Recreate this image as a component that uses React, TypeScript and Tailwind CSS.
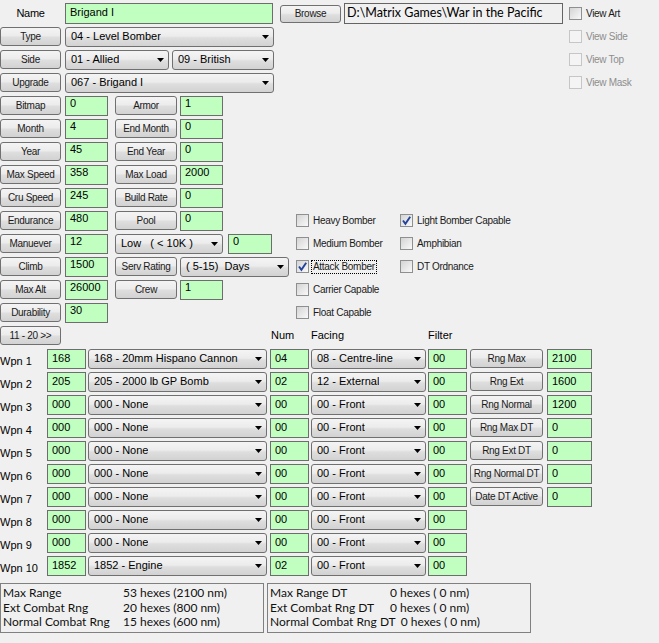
import React from 'react';

const btnBg = 'bg-[linear-gradient(#f4f4f4,#ececec_45%,#dedede_55%,#d2d2d2)]';

const Btn = ({ w, h = 'h-[19px]', children }: { w: string; h?: string; children: React.ReactNode }) => (
  <div
    className={`flex ${h} ${w} shrink-0 items-center justify-center rounded-[3px] border border-[#707070] ${btnBg} text-[10px] leading-none tracking-[-0.3px] text-[#1a1a1a]`}
  >
    {children}
  </div>
);

const Field = ({ w, v, pt = 'pt-0', h = 'h-[20px]' }: { w: string; v: string; pt?: string; h?: string }) => (
  <div className={`${h} ${w} ${pt} shrink-0 overflow-hidden border border-[#6d6d6d] bg-[#c0ffc0] pl-[4px] text-[11px] leading-[13px]`}>
    {v}
  </div>
);

const Arrow = () => (
  <svg width="7" height="4" viewBox="0 0 7 4" className="mr-[4px] shrink-0">
    <path d="M0 0 H7 L3.5 4 Z" fill="#000" />
  </svg>
);

const Combo = ({ w, v }: { w: string; v: string }) => (
  <div
    className={`flex h-[20px] ${w} shrink-0 items-center justify-between rounded-[3px] border border-[#707070] ${btnBg} pl-[5px] text-[11px]`}
  >
    <span className="truncate">{v}</span>
    <Arrow />
  </div>
);

const Check = ({
  label,
  checked = false,
  disabled = false,
  focus = false,
}: {
  label: string;
  checked?: boolean;
  disabled?: boolean;
  focus?: boolean;
}) => (
  <div className="flex items-center">
    <div
      className={`flex h-[13px] w-[13px] shrink-0 items-center justify-center border ${
        disabled ? 'border-[#c6c6c6] bg-[#f4f4f4]' : 'border-[#8e8f8f] bg-[linear-gradient(135deg,#d4d4d4,#f9f9f9)]'
      }`}
    >
      {checked && (
        <svg width="11" height="11" viewBox="0 0 11 11">
          <path d="M2 5.5 L4.4 8.8 L9.2 1.8" stroke="#24449c" strokeWidth="1.9" fill="none" />
        </svg>
      )}
    </div>
    <span
      className={`ml-[3px] px-px text-[10px] leading-[12px] tracking-[-0.3px] ${disabled ? 'text-[#8d8d8d]' : 'text-[#1a1a1a]'} ${
        focus ? 'outline outline-1 outline-dotted outline-black' : ''
      }`}
    >
      {label}
    </span>
  </div>
);

const Row = ({ children }: { children: React.ReactNode }) => <div className="flex h-[23px] items-center">{children}</div>;

const weapons = [
  { n: 'Wpn 1', id: '168', name: '168 - 20mm Hispano Cannon', num: '04', face: '08 - Centre-line', btn: 'Rng Max', val: '2100' },
  { n: 'Wpn 2', id: '205', name: '205 - 2000 lb GP Bomb', num: '02', face: '12 - External', btn: 'Rng Ext', val: '1600' },
  { n: 'Wpn 3', id: '000', name: '000 - None', num: '00', face: '00 - Front', btn: 'Rng Normal', val: '1200' },
  { n: 'Wpn 4', id: '000', name: '000 - None', num: '00', face: '00 - Front', btn: 'Rng Max DT', val: '0' },
  { n: 'Wpn 5', id: '000', name: '000 - None', num: '00', face: '00 - Front', btn: 'Rng Ext DT', val: '0' },
  { n: 'Wpn 6', id: '000', name: '000 - None', num: '00', face: '00 - Front', btn: 'Rng Normal DT', val: '0' },
  { n: 'Wpn 7', id: '000', name: '000 - None', num: '00', face: '00 - Front', btn: 'Date DT Active', val: '0' },
  { n: 'Wpn 8', id: '000', name: '000 - None', num: '00', face: '00 - Front' },
  { n: 'Wpn 9', id: '000', name: '000 - None', num: '00', face: '00 - Front' },
  { n: 'Wpn 10', id: '1852', name: '1852 - Engine', num: '02', face: '00 - Front' },
];

const statPair = (a: [string, string, string][]) =>
  a.map(([k, v, extra]) => (
    <div key={k} className="flex whitespace-nowrap">
      <span className={`min-w-[120px] shrink-0 ${extra}`}>{k}</span>
      <span>{v}</span>
    </div>
  ));

export default function App() {
  return (
    <div className="h-[643px] w-[659px] overflow-hidden bg-[#f0f0f0] pt-[2px] font-['Liberation_Sans',Arial,sans-serif] text-black">
      {/* name / art row */}
      <Row>
        <div className="w-[61px] shrink-0 text-center text-[11px] tracking-[-0.3px]">Name</div>
        <div className="ml-[4px]">
          <Field w="w-[208px]" h="h-[21px]" pt="pt-[2px]" v="Brigand I" />
        </div>
        <div className="ml-[7px]">
          <Btn w="w-[61px]" h="h-[18px]">
            Browse
          </Btn>
        </div>
        <div className="ml-[3px] h-[21px] w-[219px] shrink-0 overflow-hidden whitespace-nowrap border border-[#646464] pl-[2px] font-['Lato',sans-serif] text-[12.5px] leading-[17px]">
          {'D:\\Matrix Games\\War in the Pacific'}
        </div>
        <div className="ml-[6px]">
          <Check label="View Art" />
        </div>
      </Row>

      <Row>
        <Btn w="w-[61px]">Type</Btn>
        <div className="ml-[4px] w-[504px]">
          <Combo w="w-[209px]" v="04 - Level Bomber" />
        </div>
        <Check label="View Side" disabled />
      </Row>
      <Row>
        <Btn w="w-[61px]">Side</Btn>
        <div className="ml-[4px] flex w-[504px]">
          <Combo w="w-[104px]" v="01 - Allied" />
          <div className="ml-[3px]">
            <Combo w="w-[102px]" v="09 - British" />
          </div>
        </div>
        <Check label="View Top" disabled />
      </Row>
      <Row>
        <Btn w="w-[61px]">Upgrade</Btn>
        <div className="ml-[4px] w-[504px]">
          <Combo w="w-[209px]" v="067 - Brigand I" />
        </div>
        <Check label="View Mask" disabled />
      </Row>

      {[
        ['Bitmap', '0', 'Armor', '1'],
        ['Month', '4', 'End Month', '0'],
        ['Year', '45', 'End Year', '0'],
        ['Max Speed', '358', 'Max Load', '2000'],
        ['Cru Speed', '245', 'Build Rate', '0'],
      ].map(([a, av, b, bv]) => (
        <Row key={a}>
          <Btn w="w-[61px]">{a}</Btn>
          <div className="ml-[4px]">
            <Field w="w-[43px]" v={av} />
          </div>
          <div className="ml-[7px]">
            <Btn w="w-[62px]">{b}</Btn>
          </div>
          <div className="ml-[3px]">
            <Field w="w-[43px]" v={bv} />
          </div>
        </Row>
      ))}

      {/* rows with bomber checkboxes */}
      <Row>
        <div className="flex w-[296px] shrink-0 items-center">
          <Btn w="w-[61px]">Endurance</Btn>
          <div className="ml-[4px]">
            <Field w="w-[43px]" v="480" />
          </div>
          <div className="ml-[7px]">
            <Btn w="w-[62px]">Pool</Btn>
          </div>
          <div className="ml-[3px]">
            <Field w="w-[43px]" v="0" />
          </div>
        </div>
        <div className="w-[104px] shrink-0">
          <Check label="Heavy Bomber" />
        </div>
        <Check label="Light Bomber Capable" checked />
      </Row>
      <Row>
        <div className="flex w-[296px] shrink-0 items-center">
          <Btn w="w-[61px]">Manuever</Btn>
          <div className="ml-[4px]">
            <Field w="w-[43px]" v="12" />
          </div>
          <div className="ml-[7px]">
            <Combo w="w-[108px]" v={'Low\u00a0\u00a0\u00a0(\u00a0< 10K )'} />
          </div>
          <div className="ml-[5px]">
            <Field w="w-[44px]" v="0" />
          </div>
        </div>
        <div className="w-[104px] shrink-0">
          <Check label="Medium Bomber" />
        </div>
        <Check label="Amphibian" />
      </Row>
      <Row>
        <div className="flex w-[296px] shrink-0 items-center">
          <Btn w="w-[61px]">Climb</Btn>
          <div className="ml-[4px]">
            <Field w="w-[43px]" v="1500" />
          </div>
          <div className="ml-[7px]">
            <Btn w="w-[62px]">Serv Rating</Btn>
          </div>
          <div className="ml-[3px]">
            <Combo w="w-[109px]" v={'( 5-15)\u00a0\u00a0Days'} />
          </div>
        </div>
        <div className="w-[104px] shrink-0">
          <Check label="Attack Bomber" checked focus />
        </div>
        <Check label="DT Ordnance" />
      </Row>
      <Row>
        <div className="flex w-[296px] shrink-0 items-center">
          <Btn w="w-[61px]">Max Alt</Btn>
          <div className="ml-[4px]">
            <Field w="w-[43px]" v="26000" />
          </div>
          <div className="ml-[7px]">
            <Btn w="w-[62px]">Crew</Btn>
          </div>
          <div className="ml-[3px]">
            <Field w="w-[43px]" v="1" />
          </div>
        </div>
        <Check label="Carrier Capable" />
      </Row>
      <Row>
        <div className="flex w-[296px] shrink-0 items-center">
          <Btn w="w-[61px]">Durability</Btn>
          <div className="ml-[4px]">
            <Field w="w-[43px]" v="30" />
          </div>
        </div>
        <Check label="Float Capable" />
      </Row>

      <Row>
        <Btn w="w-[61px]">11 - 20 &gt;&gt;</Btn>
        <span className="ml-[210px] w-[40px] text-[11px]">Num</span>
        <span className="w-[117px] text-[11px]">Facing</span>
        <span className="text-[11px]">Filter</span>
      </Row>

      {weapons.map((w) => (
        <Row key={w.n}>
          <span className="mt-[6px] w-[47px] shrink-0 text-[11px]">{w.n}</span>
          <Field w="w-[39px]" pt="pt-[2px]" v={w.id} />
          <div className="ml-[2px]">
            <Combo w="w-[179px]" v={w.name} />
          </div>
          <div className="ml-[3px]">
            <Field w="w-[39px]" pt="pt-[2px]" v={w.num} />
          </div>
          <div className="ml-[2px]">
            <Combo w="w-[115px]" v={w.face} />
          </div>
          <div className="ml-[2px]">
            <Field w="w-[39px]" pt="pt-[2px]" v="00" />
          </div>
          {w.btn && (
            <>
              <div className="ml-[3px]">
                <Btn w="w-[73px]">{w.btn}</Btn>
              </div>
              <div className="ml-[4px]">
                <Field w="w-[45px]" pt="pt-[2px]" v={w.val!} />
              </div>
            </>
          )}
        </Row>
      ))}

      {/* range summary */}
      <div className="mt-[6px] flex font-['Lato',sans-serif] text-[12px] leading-[14.5px] text-[#111]">
        <div className="h-[50px] w-[264px] shrink-0 border border-[#808080] pl-[2px] pt-[2px]">
          {statPair([
            ['Max Range', '53 hexes (2100 nm)', ''],
            ['Ext Combat Rng', '20 hexes (800 nm)', ''],
            ['Normal Combat Rng', '15 hexes (600 nm)', ''],
          ])}
        </div>
        <div className="ml-[3px] h-[50px] w-[264px] shrink-0 border border-[#808080] pl-[2px] pt-[2px]">
          {statPair([
            ['Max Range DT', '0 hexes ( 0 nm)', ''],
            ['Ext Combat Rng DT', '0 hexes ( 0 nm)', ''],
            ['Normal Combat Rng DT', '0 hexes ( 0 nm)', 'pr-[5px]'],
          ])}
        </div>
      </div>
    </div>
  );
}
